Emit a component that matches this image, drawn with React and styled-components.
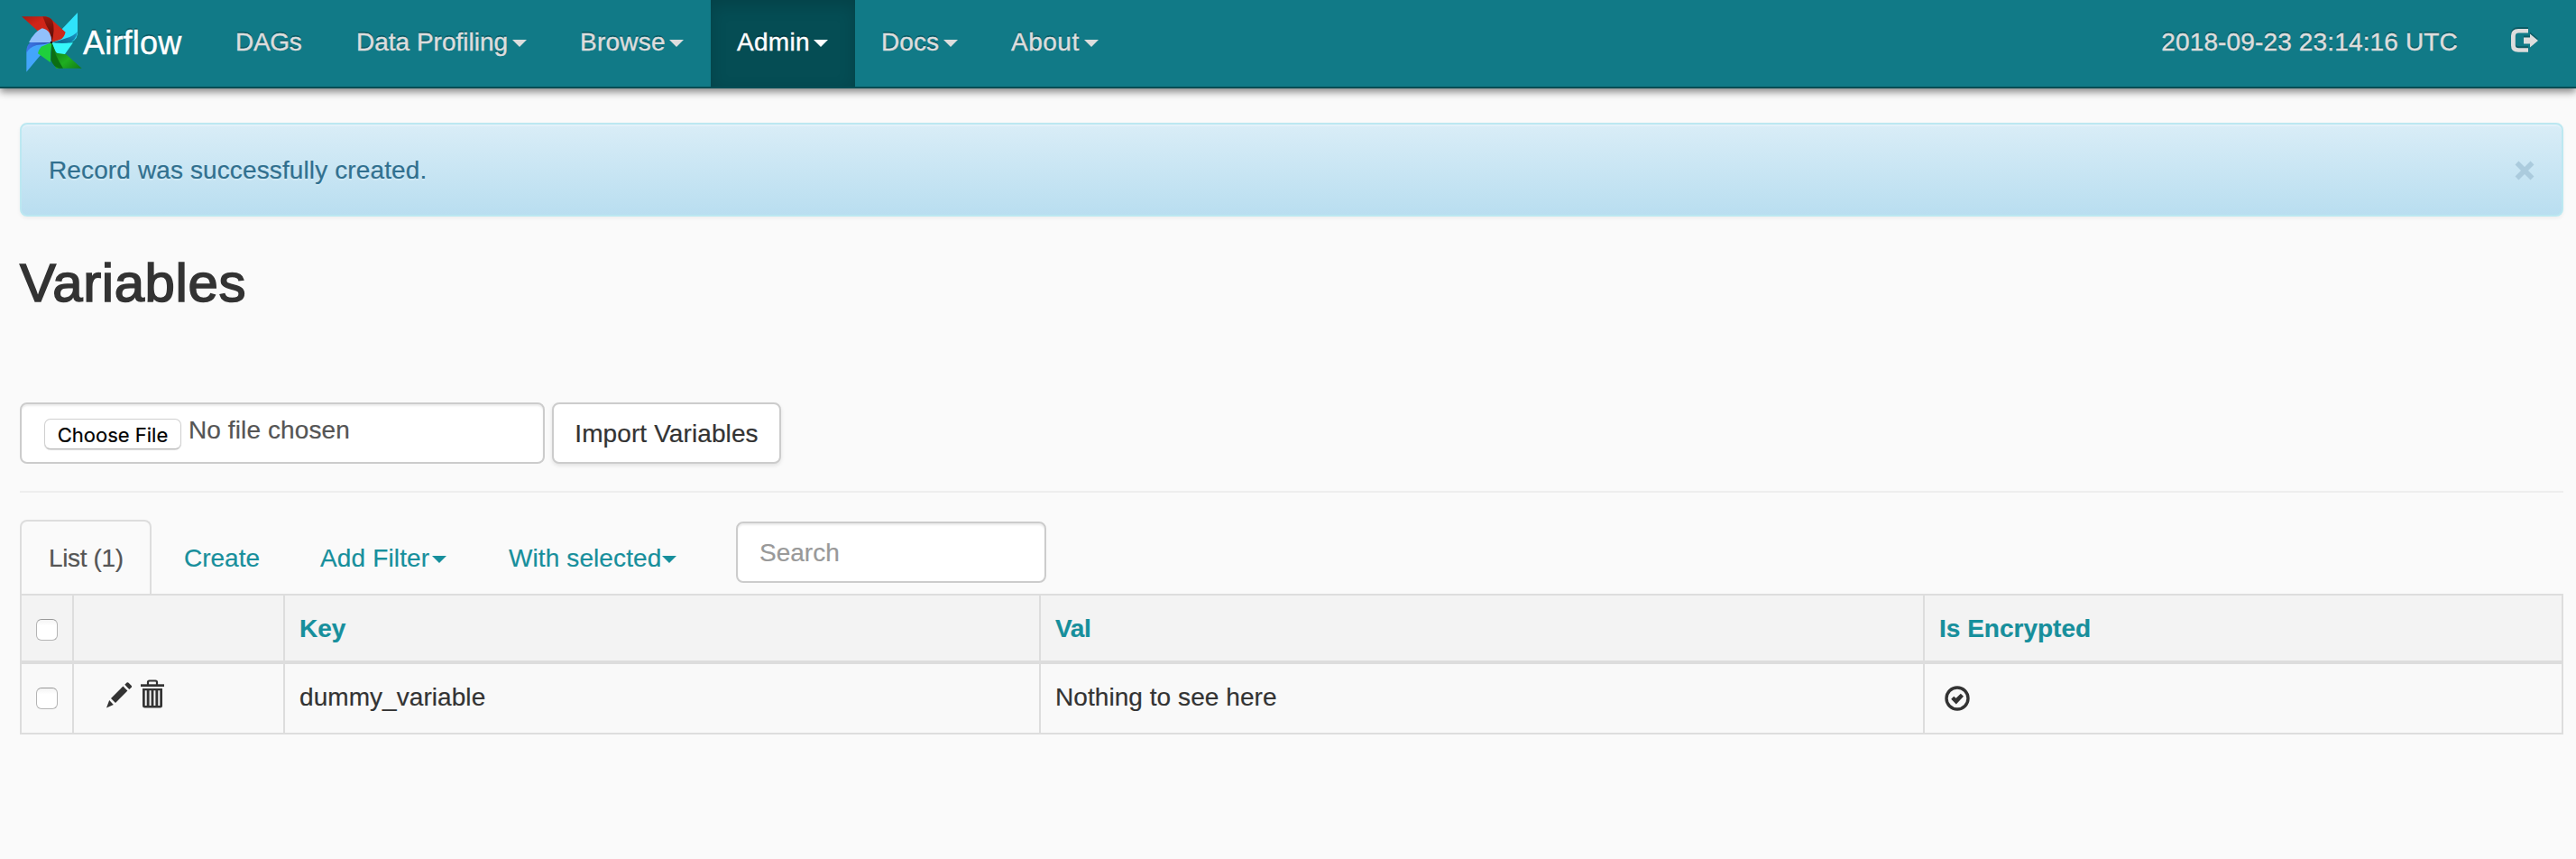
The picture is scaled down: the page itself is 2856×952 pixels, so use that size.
import React from "react";
import styled, { createGlobalStyle } from "styled-components";

const GlobalStyle = createGlobalStyle`
  *, *::before, *::after { box-sizing: border-box; }
  body {
    margin: 0;
    background: #fafafa;
    color: #333;
    font: 28px/40px "Liberation Sans", Arial, sans-serif;
    -webkit-text-stroke: 0.2px currentColor;
  }
  input, button { font: inherit; }
`;

const Page = styled.div`
  min-height: 952px;
`;

const Navbar = styled.nav`
  display: flex;
  height: 98px;
  background: #117a87;
  border-bottom: 2px solid #054d54;
  box-shadow: 0 4px 8px #888;
  color: #ddd;
  text-shadow: 0 -2px 0 rgba(0, 0, 0, 0.25);
  -webkit-text-stroke: 0.4px currentColor;
`;

const Brand = styled.a`
  display: flex;
  align-items: center;
  width: 232px;
  padding: 0 0 2px 22px;
  color: #fff;
  font-size: 36px;
  letter-spacing: 0.2px;
`;

const BrandName = styled.span`
  padding-top: 2px;
`;

const NavItem = styled.a`
  display: flex;
  align-items: center;
  justify-content: space-between;
  width: ${(p) => p.$width}px;
  padding: 0 30px 2px 29px;
  letter-spacing: ${(p) => p.$track || 0}px;
  white-space: nowrap;
  ${(p) =>
    p.$active &&
    `color: #fff; background: #054d54; box-shadow: inset 0 6px 18px rgba(0, 0, 0, 0.15);`}
`;

const Caret = styled.span`
  flex: none;
  border: 8px solid transparent;
  border-top-color: currentColor;
  border-bottom: 0;
  margin-top: ${(p) => p.$top || 0}px;
  margin-left: ${(p) => p.$left || 0}px;
`;

const NavRight = styled.div`
  display: flex;
  align-items: center;
  gap: 59px;
  margin-left: auto;
  padding: 0 42px 2px 0;
  letter-spacing: 0.15px;
`;

const Content = styled.main`
  padding: 38px 14px 0 22px;
`;

const Alert = styled.div`
  display: flex;
  align-items: center;
  justify-content: space-between;
  height: 104px;
  padding: 2px 30px 0;
  border: 2px solid #bce8f1;
  border-radius: 8px;
  background: linear-gradient(to bottom, #d9edf7 0%, #b9def0 100%);
  box-shadow: inset 0 2px 0 rgba(255, 255, 255, 0.25), 0 2px 4px rgba(0, 0, 0, 0.05);
  color: #31708f;
  letter-spacing: 0.12px;
  text-shadow: 0 2px 0 rgba(255, 255, 255, 0.2);
`;

const Title = styled.h1`
  margin: 41px 0 99px;
  font-size: 60px;
  line-height: 66px;
  font-weight: 400;
  letter-spacing: 0.6px;
  -webkit-text-stroke: 1.6px currentColor;
`;

const ImportForm = styled.div`
  display: flex;
  gap: 8px;
`;

const FileField = styled.label`
  display: flex;
  width: 582px;
  height: 68px;
  padding: 9px 25px 7px;
  gap: 8px;
  border: 2px solid #ccc;
  border-radius: 8px;
  background: #fff;
  box-shadow: inset 0 2px 2px rgba(0, 0, 0, 0.075);
  color: #555;
  letter-spacing: 0.1px;
`;

const FileButton = styled.span`
  width: 152px;
  height: 34px;
  margin-top: 7px;
  border: 1px solid #d0d0d0;
  border-bottom-color: #b5b5b5;
  border-radius: 7px;
  background: #fff;
  box-shadow: 0 1px 1px rgba(0, 0, 0, 0.12);
  color: #000;
  font: 22px/34px Inter, sans-serif;
  letter-spacing: 0;
  text-align: center;
`;

const ImportButton = styled.button`
  width: 254px;
  height: 68px;
  padding: 2px 0 0;
  border: 2px solid #ccc;
  border-radius: 8px;
  background: #fff;
  box-shadow: 0 2px 4px rgba(0, 0, 0, 0.1);
  color: #333;
  letter-spacing: 0.1px;
  white-space: nowrap;
  -webkit-text-stroke: 0.2px currentColor;
`;

const Divider = styled.hr`
  height: 2px;
  margin: 30px 0;
  border: 0;
  background: #eee;
`;

const Tabs = styled.div`
  display: flex;
  height: 82px;
  color: #178f9c;
`;

const Tab = styled.a`
  display: flex;
  align-items: center;
  width: ${(p) => p.$width}px;
  padding: 2px 0 0 ${(p) => p.$pad || 31}px;
  border: 2px solid transparent;
  border-bottom: 0;
  border-radius: 8px 8px 0 0;
  letter-spacing: ${(p) => p.$track || 0}px;
  white-space: nowrap;
  ${(p) => p.$active && `color: #555; border-color: #ddd;`}
`;

const SearchInput = styled.input`
  width: 344px;
  height: 68px;
  margin: 2px 0 0;
  padding: 2px 24px 0;
  border: 2px solid #ccc;
  border-radius: 8px;
  background: #fff;
  box-shadow: inset 0 2px 2px rgba(0, 0, 0, 0.075);
  &::placeholder { color: #999; opacity: 1; }
`;

const Table = styled.table`
  width: 2820px;
  table-layout: fixed;
  border-collapse: separate;
  border-spacing: 0;
  border: 2px solid #ddd;
  border-width: 2px 0 0 2px;
`;

const HeadCell = styled.th`
  height: 76px;
  padding: ${(p) => (p.$control ? 0 : 2)}px 16px 0;
  background: #f3f3f3;
  border: solid #ddd;
  border-width: 0 2px 4px 0;
  color: #178f9c;
  text-align: left;
  letter-spacing: ${(p) => p.$track || 0}px;
`;

const Cell = styled.td`
  height: 78px;
  padding: 0 16px ${(p) => (p.$control ? 0 : 2)}px;
  background: #f9f9f9;
  border: solid #ddd;
  border-width: 0 2px 2px 0;
  letter-spacing: 0.06px;
`;

const Checkbox = styled.input.attrs({ type: "checkbox" })`
  appearance: none;
  display: block;
  width: 24px;
  height: 24px;
  margin: ${(p) => p.$top || 0}px 0 0;
  border: 1.5px solid #b4b4b4;
  border-top-color: #999;
  border-radius: 6px;
  background: linear-gradient(#f4f4f4, #fff 30%);
`;

const Actions = styled.div`
  display: flex;
  gap: 9px;
  padding: 0 0 11px 20px;
  svg { display: block; }
`;

const CheckMark = styled.svg`
  display: block;
  margin-left: 6px;
`;

const LogoutGlyph = styled.svg`
  filter: drop-shadow(0 -2px 0 rgba(0, 0, 0, 0.25));
  overflow: visible;
`;

function Pinwheel() {
  return (
    <svg width="70" height="68" viewBox="36 24 210 204">
      <defs>
        <linearGradient id="red" x1="0" y1="0" x2="1" y2="1">
          <stop offset="0" stopColor="#a81a10" />
          <stop offset=".3" stopColor="#d02418" />
          <stop offset="1" stopColor="#c92a1a" />
        </linearGradient>
        <linearGradient id="redFold" x1="0" y1="0" x2="0" y2="1">
          <stop offset="0" stopColor="#9c180e" />
          <stop offset="1" stopColor="#4e0c06" />
        </linearGradient>
        <linearGradient id="green" x1="0" y1="0" x2="1" y2="1">
          <stop offset="0" stopColor="#0c6a12" />
          <stop offset=".6" stopColor="#1fae20" />
          <stop offset="1" stopColor="#127a14" />
        </linearGradient>
        <linearGradient id="blueFold" x1="0" y1="0" x2="1" y2="0">
          <stop offset="0" stopColor="#3b78e8" />
          <stop offset="1" stopColor="#2c4fae" />
        </linearGradient>
        <linearGradient id="cyanFold" x1="0" y1="1" x2="1" y2="0">
          <stop offset="0" stopColor="#0b5f84" />
          <stop offset="1" stopColor="#1b98c8" />
        </linearGradient>
      </defs>
      <path d="M228 27 V98 Q224 124 192 128 L142 126 L174 84 Z" fill="#2fe3fb" />
      <path d="M228 90 Q222 127 190 130 L142 126 Q168 121 190 112 Q215 105 228 90 Z" fill="url(#cyanFold)" />
      <path d="M142 126 Q165 132 213 127 L180 173 Q164 168 153 155 Z" fill="#35f7fa" />
      <path d="M42 40 H116 Q134 40 146 54 L188 92 Q182 113 169 117 L142 126 L102 94 Z" fill="url(#red)" />
      <path d="M112 40 Q138 40 145 55 Q154 82 142 126 Q141 96 124 70 Z" fill="url(#redFold)" />
      <path d="M58 224 V160 Q62 138 84 132 L142 126 L108 164 Z" fill="#43a5fb" />
      <path d="M58 162 Q56 124 88 121 L142 126 Q120 133 92 135 Q66 142 58 162 Z" fill="url(#blueFold)" />
      <path d="M142 126 L66 126 Q84 91 110 79 Q126 82 134 94 Q142 107 142 126 Z" fill="#91c0fb" />
      <path d="M142 126 Q139 163 156 212 H242 L190 166 L157 161 Z" fill="url(#green)" />
      <path d="M142 126 Q150 165 180 212 H166 Q148 208 139 184 Z" fill="#0b6e14" />
      <path d="M142 126 L107 140 Q98 151 96 163 L138 193 Q136 160 142 126 Z" fill="#1fcf3c" />
      <circle cx="141" cy="126" r="4" fill="#111" />
    </svg>
  );
}

function LogoutIcon() {
  return (
    <LogoutGlyph width="30" height="30" viewBox="0 0 30 30" fill="currentColor">
      <path d="M19 0 V4.6 H8.5 Q4.8 4.6 4.8 8 V18 Q4.8 21.2 8.5 21.2 H19 V25.8 H8 Q0 25.8 0 18.5 V7.5 Q0 0 8 0 Z" />
      <path d="M14 9.6 H21 V5.6 L30 13 L21 20.6 V16.4 H14 Z" />
    </LogoutGlyph>
  );
}

function CloseIcon() {
  return (
    <svg width="22" height="22" viewBox="0 0 22 22" fill="none" stroke="#abcbdd" strokeWidth="5.6">
      <path d="M2.5 2.5 L19.5 19.5 M19.5 2.5 L2.5 19.5" />
    </svg>
  );
}

function PencilIcon() {
  return (
    <svg width="29" height="32" viewBox="0 0 29 32" fill="#333">
      <path d="M0 31.5 L3.2 23 L7.8 28 Z" />
      <path d="M5 21 L18.4 7.6 L23.4 12.6 L10 26 Z" />
      <path d="M20.3 5.8 L22.6 3.6 Q23.6 2.8 24.6 3.7 L27.8 7 Q28.6 7.9 27.8 8.8 L25.3 10.9 Z" />
    </svg>
  );
}

function TrashIcon() {
  return (
    <svg width="26" height="32" viewBox="0 0 26 32">
      <path d="M8 6 V3 Q8 1.5 9.6 1.5 H16.4 Q18 1.5 18 3 V6" fill="none" stroke="#333" strokeWidth="2.2" />
      <path d="M0 5.3 H26 V8 H0 Z" fill="#333" />
      <path d="M2 10 H24 V29 Q24 31.5 21.5 31.5 H4.5 Q2 31.5 2 29 Z" fill="#333" />
      <path d="M5.7 12.3 V29 M10.6 12.3 V29 M15.4 12.3 V29 M20.3 12.3 V29" stroke="#f9f9f9" strokeWidth="2" />
    </svg>
  );
}

const NAV = [
  { label: "DAGs", width: 134, track: -0.3 },
  { label: "Data Profiling", width: 248, menu: true },
  { label: "Browse", width: 174, track: 0.25, menu: true },
  { label: "Admin", width: 160, track: 0.3, menu: true, active: true },
  { label: "Docs", width: 144, track: 0.1, menu: true },
  { label: "About", width: 156, track: 0.5, menu: true },
];

export default function App() {
  return (
    <Page>
      <GlobalStyle />
      <Navbar>
        <Brand>
          <Pinwheel />
          <BrandName>Airflow</BrandName>
        </Brand>
        {NAV.map((n) => (
          <NavItem key={n.label} $width={n.width} $track={n.track} $active={n.active}>
            {n.label}
            {n.menu && <Caret $top={2} />}
          </NavItem>
        ))}
        <NavRight>
          <span>2018-09-23 23:14:16 UTC</span>
          <LogoutIcon />
        </NavRight>
      </Navbar>
      <Content>
        <Alert>
          <span>Record was successfully created.</span>
          <CloseIcon />
        </Alert>
        <Title>Variables</Title>
        <ImportForm>
          <FileField>
            <FileButton>Choose File</FileButton>
            No file chosen
          </FileField>
          <ImportButton>Import Variables</ImportButton>
        </ImportForm>
        <Divider />
        <Tabs>
          <Tab $width={146} $pad={30} $track={-0.35} $active>List (1)</Tab>
          <Tab $width={154} $pad={34}>Create</Tab>
          <Tab $width={208} $track={0.15}>Add Filter<Caret $top={2} $left={3} /></Tab>
          <Tab $width={286} $pad={32} $track={0.1}>With selected<Caret $top={2} $left={1} /></Tab>
          <SearchInput placeholder="Search" />
        </Tabs>
        <Table>
          <colgroup>
            <col width="58" />
            <col width="234" />
            <col width="838" />
            <col width="980" />
            <col width="708" />
          </colgroup>
          <thead>
            <tr>
              <HeadCell $control><Checkbox $top={4} /></HeadCell>
              <HeadCell />
              <HeadCell>Key</HeadCell>
              <HeadCell $track={-0.4}>Val</HeadCell>
              <HeadCell>Is Encrypted</HeadCell>
            </tr>
          </thead>
          <tbody>
            <tr>
              <Cell $control><Checkbox /></Cell>
              <Cell $control>
                <Actions>
                  <PencilIcon />
                  <TrashIcon />
                </Actions>
              </Cell>
              <Cell>dummy_variable</Cell>
              <Cell>Nothing to see here</Cell>
              <Cell $control>
                <CheckMark width="28" height="28" viewBox="0 0 28 28">
                  <circle cx="14" cy="14" r="12" fill="none" stroke="#333" strokeWidth="3.4" />
                  <path d="M7.2 14.8 L10.2 11.8 L12.6 13.8 L17.8 8.8 L21 11.8 L12.8 20.4 Z" fill="#333" />
                </CheckMark>
              </Cell>
            </tr>
          </tbody>
        </Table>
      </Content>
    </Page>
  );
}
